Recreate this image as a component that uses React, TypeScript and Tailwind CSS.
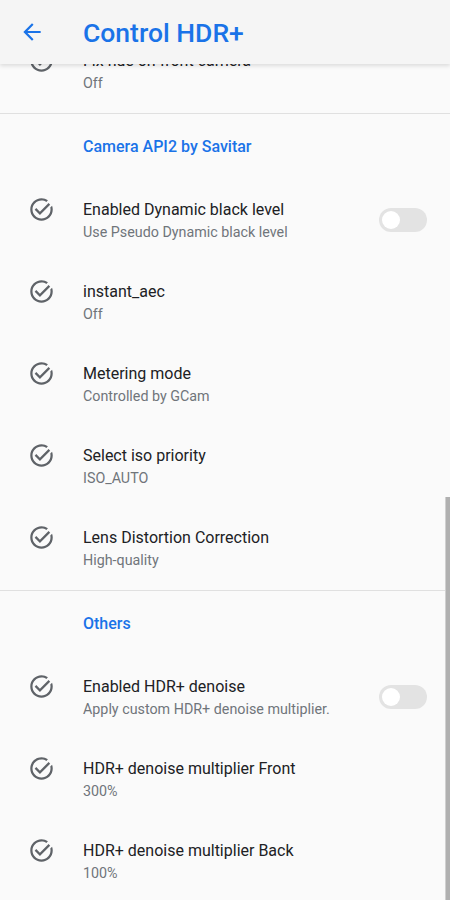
import React from 'react';

type Item = { title: string; summary: string; toggle?: boolean };

const apiItems: Item[] = [
  { title: 'Enabled Dynamic black level', summary: 'Use Pseudo Dynamic black level', toggle: true },
  { title: 'instant_aec', summary: 'Off' },
  { title: 'Metering mode', summary: 'Controlled by GCam' },
  { title: 'Select iso priority', summary: 'ISO_AUTO' },
  { title: 'Lens Distortion Correction', summary: 'High-quality' },
];

const otherItems: Item[] = [
  { title: 'Enabled HDR+ denoise', summary: 'Apply custom HDR+ denoise multiplier.', toggle: true },
  { title: 'HDR+ denoise multiplier Front', summary: '300%' },
  { title: 'HDR+ denoise multiplier Back', summary: '100%' },
];

const font = { fontFamily: 'Roboto, "Noto Sans", sans-serif' };

const TaskAlt = () => (
  <svg width="27" height="27" viewBox="0 0 24 24" fill="#5f6368" className="shrink-0">
    <path d="M19.79 10.22C19.92 10.79 20 11.39 20 12c0 4.42-3.58 8-8 8s-8-3.58-8-8 3.58-8 8-8c1.58 0 3.04.46 4.28 1.25l1.44-1.44C16.1 2.67 14.13 2 12 2 6.48 2 2 6.48 2 12s4.48 10 10 10 10-4.48 10-10c0-1.19-.22-2.33-.6-3.39l-1.61 1.61z" />
    <path d="M18.3 6.3 10.59 14l-3.23-3.23-1.41 1.41 4.64 4.64 9.12-9.11z" />
  </svg>
);

const Toggle = () => (
  <div className="w-12 h-6 mb-[3px] rounded-full bg-[#e3e3e3] flex items-center px-[3px] shrink-0">
    <div className="w-[18px] h-[18px] rounded-full bg-white" />
  </div>
);

const Row = ({ item }: { item: Item }) => (
  <div className="h-[82px] flex items-center pl-[28px] pr-[23px]">
    <div className="flex-1 flex items-start">
      <div className="mt-[-3px]">
        <TaskAlt />
      </div>
      <div className="flex-1 ml-[28px] flex flex-col">
        <span className="text-[16px] leading-[22px] text-[#202124]">{item.title}</span>
        <span className="text-[14.3px] leading-[22px] text-[#70757a]">{item.summary}</span>
      </div>
    </div>
    {item.toggle && <Toggle />}
  </div>
);

const Category = ({ label }: { label: string }) => (
  <div className="h-[66px] flex items-center pl-[83px] text-[16px] font-medium text-[#1a73e8]">
    {label}
  </div>
);

export default function App() {
  return (
    <div className="relative w-[450px] h-[900px] overflow-hidden bg-[#fafafa]" style={font}>
      <div className="absolute top-0 left-0 right-0 h-16 bg-[#f5f5f5] z-10 flex items-center shadow-[0_2px_4px_rgba(0,0,0,0.12)]">
        <div className="w-16 flex justify-center">
          <svg width="26" height="26" viewBox="0 0 24 24" fill="#1a73e8">
            <path d="M20 11H7.83l5.59-5.59L12 4l-8 8 8 8 1.41-1.41L7.83 13H20v-2z" />
          </svg>
        </div>
        <span className="ml-[19px] mt-[2px] text-[26.5px] font-medium text-[#1a73e8]">Control HDR+</span>
      </div>

      <div className="pt-[31px] flex flex-col">
        <Row item={{ title: 'Fix hue on front camera', summary: 'Off' }} />
        <div className="h-px bg-[#e0e0e0]" />
        <Category label="Camera API2 by Savitar" />
        {apiItems.map((it) => (
          <Row key={it.title} item={it} />
        ))}
        <div className="h-px bg-[#e0e0e0]" />
        <Category label="Others" />
        {otherItems.map((it) => (
          <Row key={it.title} item={it} />
        ))}
      </div>

      <div className="absolute right-0 top-[497px] bottom-0 w-[5px] bg-[#b0b0b0] border-l border-[#d0d0d0]" />
    </div>
  );
}
